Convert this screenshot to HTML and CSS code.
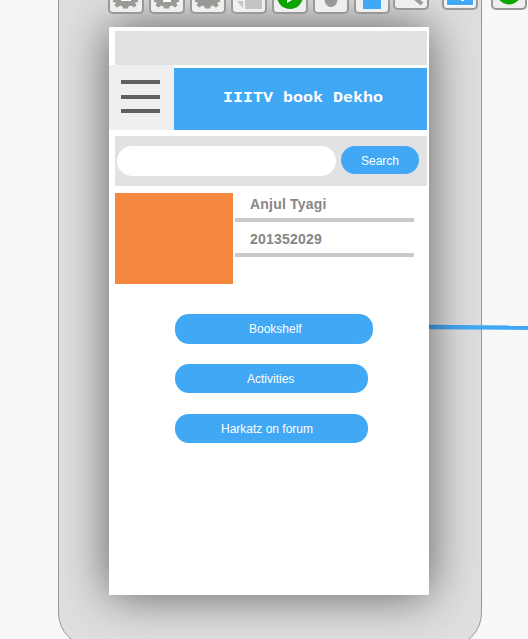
FILE: index.html
```html
<!DOCTYPE html>
<html lang="en">
<head>
<meta charset="utf-8">
<title>IIITV book Dekho</title>
<link rel="stylesheet" href="styles.css">
</head>
<body>
<div class="canvas">
  <div class="device"></div>
  <svg class="connector" width="99" height="8" viewBox="0 0 99 8"><path d="M0 3 99 3.8" stroke="#41a8f5" stroke-width="4.4"/></svg>
  <main class="screen">
    <div class="status"></div>
    <header class="header">
      <div class="menu"><i></i><i></i><i></i></div>
      <h1 class="title"><span>IIITV book Dekho</span></h1>
    </header>
    <div class="search">
      <div class="field"></div>
      <div class="button search-button">Search</div>
    </div>
    <section class="profile">
      <div class="photo"></div>
      <div class="details">
        <div class="detail name">Anjul Tyagi</div>
        <div class="detail number">201352029</div>
      </div>
    </section>
    <nav class="links">
      <div class="button link bookshelf">Bookshelf</div>
      <div class="button link activities">Activities</div>
      <div class="button link forum">Harkatz on forum</div>
    </nav>
  </main>
  <div class="toolbar">
    <div class="tool"><svg viewBox="0 0 32 12"><path class="gray" d="M3 0V2L6 2.5 4.500 5.500 7.500 7.500 10 5.500 12.500 6.500 13 8.500H18L18.500 6.500 21 5.500 24 7.500 26.500 5.500 25 2.500 28 2V0Z"/><path class="white" d="M11 0H21V1H11Z"/></svg></div>
    <div class="tool"><svg viewBox="0 0 32 12"><path class="gray" d="M3 0V2L6 2.5 4.500 5.500 7.500 7.500 10 5.500 12.500 6.500 13 8.500H18L18.500 6.500 21 5.500 24 7.500 26.500 5.500 25 2.500 28 2V0Z"/><path class="white" d="M12 0H20V2H12Z"/></svg></div>
    <div class="tool"><svg viewBox="0 0 32 12"><path class="gray" d="M3 0V2L6 2.5 4.500 5.500 7.500 7.500 10 5.500 12.500 6.500 13 8.500H18L18.500 6.500 21 5.500 24 7.500 26.500 5.500 25 2.500 28 2V0Z"/></svg></div>
    <div class="tool"><svg viewBox="0 0 32 12"><path class="pale" d="M4 1H10V8ZM12 0H29V9H12Z"/></svg></div>
    <div class="tool"><svg viewBox="0 0 32 12"><circle class="green" cx="16" cy="-4" r="13"/><path class="white" d="M13 0H18L13 3Z"/></svg></div>
    <div class="tool"><svg viewBox="0 0 32 12"><ellipse class="gray" cx="16" cy="-1" rx="6.5" ry="8"/></svg></div>
    <div class="tool"><svg viewBox="0 0 32 12"><path class="blue" d="M7 0H25V9H7Z"/></svg></div>
    <div class="tool short search-tool"><svg viewBox="0 0 32 12"><path d="M20-2 27 4" stroke="#999" stroke-width="4"/></svg></div>
    <div class="tool short image-tool"><svg viewBox="0 0 32 12"><path class="white" d="M2 0H30V6H2Z"/><path class="blue" d="M3 0H29V5H3Z"/><path class="white" d="M17 0H20V1H17Z"/></svg></div>
    <div class="tool short run-tool"><svg viewBox="0 0 32 12"><circle class="green" cx="16" cy="-8" r="12.5"/></svg></div>
  </div>
</div>
</body>
</html>
```
FILE: styles.css
```css
* { box-sizing: border-box; }
body {
  margin: 0;
  background: #f8f8f8;
  font-family: "Liberation Sans", Arial, sans-serif;
}
.canvas {
  position: relative;
  width: 528px;
  height: 639px;
  padding: 27px 0 0 109px;
  overflow: hidden;
}
.device {
  position: absolute;
  left: 58px;
  top: -40px;
  width: 424px;
  height: 687px;
  border: 1px solid #999;
  border-radius: 34px;
  background: #dfdfdf;
}
.connector { position: absolute; left: 429px; top: 324px; }
.screen {
  position: relative;
  width: 320px;
  height: 568px;
  padding-top: 4px;
  background: #fff;
  box-shadow: 0 0 45px rgba(0, 0, 0, .58);
}
.status { height: 34px; margin: 0 2px 0 6px; background: #e2e2e2; }
.header { display: flex; align-items: flex-end; height: 65px; }
.menu {
  display: flex;
  flex-direction: column;
  width: 65px;
  height: 65px;
  padding: 15px 14px 0 12px;
  background: #efefef;
}
.menu i { height: 4px; margin-bottom: 11px; background: #606060; }
.menu i:nth-child(2) { margin-bottom: 10px; }
.title {
  width: 253px;
  height: 62px;
  margin: 0;
  padding-left: 5px;
  background: #41a8f5;
  color: #fff;
  font: bold 15px/61px "Liberation Mono", "Courier New", monospace;
  text-align: center;
  white-space: nowrap;
}
.title span { display: inline-block; transform: scaleX(1.111); }
.search {
  display: flex;
  gap: 5px;
  height: 50px;
  margin: 6px 2px 0 6px;
  padding: 10px 8px 0 2px;
  background: #e2e2e2;
}
.field { width: 219px; height: 30px; border-radius: 15px; background: #fff; }
.button {
  border-radius: 14px;
  background: #41a8f5;
  color: #fff;
  font-size: 12px;
  line-height: 30px;
  white-space: nowrap;
}
.search-button { width: 78px; height: 28px; padding-left: 20px; }
.profile { display: flex; gap: 2px; margin: 7px 0 0 6px; }
.photo { width: 118px; height: 91px; background: #f6873f; }
.details { width: 179px; }
.detail {
  padding-left: 15px;
  border-bottom: 4px solid #cacaca;
  color: #868686;
  font-size: 14px;
  font-weight: bold;
  letter-spacing: .2px;
}
.name { height: 29px; line-height: 22px; }
.number { height: 35px; line-height: 34px; }
.links { display: flex; flex-direction: column; padding: 30px 0 0 66px; }
.link { width: 193px; height: 29px; margin-bottom: 21px; }
.bookshelf { width: 198px; height: 30px; margin-bottom: 20px; padding-left: 74px; }
.activities { padding-left: 72px; }
.forum { padding-left: 46px; }
.toolbar {
  position: absolute;
  top: 0;
  left: 108px;
  display: flex;
  gap: 5px;
}
.tool {
  width: 36px;
  height: 14px;
  flex: none;
  border: 2px solid #999;
  border-top: 0;
  border-radius: 0 0 5px 5px;
  background: #efefef;
  overflow: hidden;
}
.tool svg { display: block; width: 32px; height: 12px; }
.short { height: 10px; }
.search-tool { margin-left: -2px; }
.image-tool { margin-left: 8px; }
.run-tool { margin-left: 8px; }
.gray { fill: #999996; }
.pale { fill: #c4c4c4; }
.white { fill: #fff; }
.green { fill: #0ca500; }
.blue { fill: #41a8f5; }
```
